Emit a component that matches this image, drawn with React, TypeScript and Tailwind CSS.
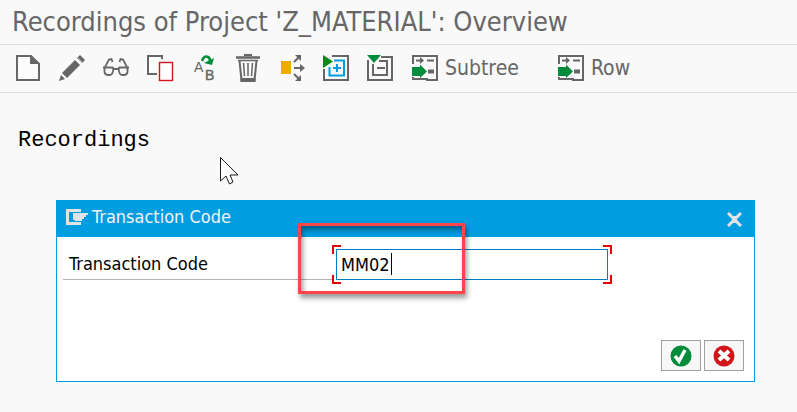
import { useState } from "react";
import type { ReactNode } from "react";

function Icon({ children }: { children: ReactNode }) {
  return (
    <svg viewBox="0 0 28 28" className="h-7 w-7 shrink-0" fill="none" stroke="#666666" strokeWidth="2" aria-hidden="true">
      {children}
    </svg>
  );
}

const CreateIcon = () => (
  <Icon>
    <path d="M3 2H17L25 10V26H3Z" fill="#fcfcfc" />
    <path d="M16 1L26 10H16Z" fill="#666666" stroke="none" />
  </Icon>
);

const EditIcon = () => (
  <Icon>
    <g fill="#666666" stroke="none">
      <path d="M1 27L3 21L7 25Z" />
      <path d="M4 19L17 6L22 11L9 24Z" />
      <path d="M19 4L22 1L27 6L24 9Z" />
    </g>
    <path d="M4 20L8 24" stroke="#f9f9f9" strokeWidth="1" />
    <path d="M20 4L24 8" stroke="#f9f9f9" strokeWidth="0.600" />
  </Icon>
);

const DisplayIcon = () => (
  <Icon>
    <g strokeWidth="1.800">
      <path d="M1 13.500H10.500L12 15H16L17.500 13.500H27" />
      <path d="M2.500 14V18Q3 21 6 21H8Q11 21 11.500 14" />
      <path d="M16.500 14Q17 21 20 21H22Q25 21 25.500 18V14" />
      <path d="M3 13L7 5.500L9.500 5L10.500 8M25 13L21 5.500L18.500 5L17.500 8" />
    </g>
  </Icon>
);

const CopyIcon = () => (
  <Icon>
    <path d="M2 2H16V8H13V20H2Z" fill="#fcfcfc" stroke="none" />
    <path d="M16 5V2H2V20H11" />
    <rect x="13.5" y="8.5" width="13" height="18" fill="#fff" stroke="#d0161b" strokeWidth="1.4" />
  </Icon>
);

const RenameIcon = () => (
  <Icon>
    <g fill="#666666" stroke="none" className="font-['Liberation_Sans',sans-serif]">
      <text x="4" y="18" fontSize="14">A</text>
      <text x="15" y="26" fontSize="14" stroke="#666666" strokeWidth="0.4">B</text>
    </g>
    <path d="M12 7Q14 1 18 3Q20 4 20 7" stroke="#008c3a" strokeWidth="2.6" />
    <path d="M14 9L24 4L22 11Z" fill="#008c3a" stroke="none" />
  </Icon>
);

const DeleteIcon = () => (
  <Icon>
    <path d="M10 1H18" />
    <path d="M2 3.500H26" strokeWidth="2.500" />
    <path d="M4 6.500H24" strokeWidth="1.500" />
    <path d="M5.500 7L7.500 26H20.500L22.500 7" />
    <path d="M6.500 24H21.500V28H6.500Z" fill="#666666" stroke="none" />
    <path d="M9.500 9L10.500 22M14 9V22M18.500 9L17.500 22" strokeWidth="1.5" />
  </Icon>
);

const WhereUsedIcon = () => (
  <Icon>
    <rect x="3" y="7" width="10" height="13" fill="#f0ab00" stroke="none" />
    <path d="M16 8L21 3M16 14H24M16 20L21 25" />
    <path d="M17 1H23V7ZM22 10L27 14L22 18ZM17 27H23V21Z" fill="#666666" stroke="none" />
  </Icon>
);

const ExpandIcon = () => (
  <Icon>
    <path d="M10 2H26V26H2V15" />
    <path d="M12 6.500H22V21.500H7.500V13" stroke="#009de0" />
    <path d="M11 14H19M15 10V18" stroke="#009de0" />
    <path d="M1 1L11 7.500L1 14Z" fill="#008c1a" stroke="none" />
  </Icon>
);

const CollapseIcon = () => (
  <Icon>
    <path d="M15 3H26V26H2V6" />
    <path d="M13 7H21V21H7V10" />
    <path d="M11 14H19" />
    <path d="M1 1H15L8 9Z" fill="#008c3a" stroke="none" />
  </Icon>
);

const InsertIcon = () => (
  <Icon>
    <path d="M2 10V2H26V26H15M2 23V25H17" />
    <path d="M5 6.500H11M16 6.500H23" />
    <path d="M9 3V10L13 6.500Z" fill="#666666" stroke="none" />
    <path d="M17 17.500H23" strokeWidth="4" />
    <path d="M1 13H9V10.500L16 17.500L9 24V22H1Z" fill="#008c3a" stroke="none" />
  </Icon>
);

const tools = [
  { name: "Create", Glyph: CreateIcon },
  { name: "Change", Glyph: EditIcon },
  { name: "Display", Glyph: DisplayIcon },
  { name: "Copy", Glyph: CopyIcon },
  { name: "Rename", Glyph: RenameIcon },
  { name: "Delete", Glyph: DeleteIcon },
  { name: "Where used", Glyph: WhereUsedIcon },
  { name: "Expand", Glyph: ExpandIcon },
  { name: "Collapse", Glyph: CollapseIcon },
];

function Toolbar() {
  return (
    <div role="toolbar" className="flex h-12 items-center border-b border-[#dcdcdc] px-3.5 pb-px text-[21px] leading-7">
      <div className="flex gap-4">
        {tools.map(({ name, Glyph }) => (
          <button key={name} type="button" aria-label={name}>
            <Glyph />
          </button>
        ))}
      </div>
      <div className="ml-[17px] flex gap-[38px]">
        <button type="button" className="flex items-center gap-1.5">
          <InsertIcon />
          Subtree
        </button>
        <button type="button" className="flex items-center gap-1.5">
          <InsertIcon />
          Row
        </button>
      </div>
    </div>
  );
}

function TransactionField() {
  const [code, setCode] = useState("MM02");
  return (
    <div className="flex items-end pt-2 pl-1.5">
      <label htmlFor="tcode" className="mb-1 h-[31px] w-[269px] border-b border-[#b4b4b4] pl-1.5 text-[18px] leading-[30px]">
        Transaction Code
      </label>
      <div className="relative p-1">
        <span className="absolute top-0 left-0 h-[9px] w-[9px] border-t-2 border-l-2 border-[#e00008]" />
        <span className="absolute top-0 right-0 h-[9px] w-[9px] border-t-2 border-r-2 border-[#e00008]" />
        <span className="absolute bottom-0 left-0 h-[9px] w-[9px] border-b-2 border-l-2 border-[#e00008]" />
        <span className="absolute right-0 bottom-0 h-[9px] w-[9px] border-r-2 border-b-2 border-[#e00008]" />
        <input
          id="tcode"
          value={code}
          onChange={(e) => setCode(e.target.value)}
          className="block h-[31px] w-[272px] border border-[#007cc0] bg-white px-1 text-[18px] text-black outline-none"
        />
        <span className="absolute top-2 left-[59px] h-[22px] w-px bg-black" />
        <span className="pointer-events-none absolute -top-[22px] -left-[34px] h-[71px] w-[167px] border-3 border-[#fb4549] shadow-[2px_4px_5px_rgba(0,0,0,0.4),inset_2px_4px_5px_rgba(0,0,0,0.4)]" />
      </div>
    </div>
  );
}

function TransactionDialog() {
  return (
    <section role="dialog" aria-label="Transaction Code" className="mr-[42px] ml-14 border border-[#009de0] bg-white text-black">
      <header className="flex h-9 items-center justify-between bg-[#009de0] pr-3 pl-[9px] text-[#f0f4f6]">
        <div className="flex items-start gap-[3px]">
          <svg viewBox="0 0 23 16" className="mt-1 h-4 w-[23px]" fill="#dfe3e5" aria-hidden="true">
            <path d="M0 0H15V3H3V13H15V16H0Z" />
            <path d="M7 4H22V6H20V8H18V10H16V12H9V11H7Z" />
          </svg>
          <h2 className="pb-1 text-[18px] leading-6">Transaction Code</h2>
        </div>
        <button type="button" aria-label="Close">
          <svg viewBox="0 0 15 15" className="h-[15px] w-[15px]" aria-hidden="true">
            <path d="M1 1L14 14M14 1L1 14" stroke="#dfe3e5" strokeWidth="3" />
            <rect x="5" y="4" width="5" height="7" fill="#dfe3e5" />
          </svg>
        </button>
      </header>
      <TransactionField />
      <footer className="flex justify-end gap-[3px] pt-14 pr-2.5 pb-2.5">
        <button type="button" aria-label="Continue" className="flex h-[31px] w-10 items-center justify-center border border-[#a0a0a0] bg-[#f7f7f7]">
          <svg viewBox="0 0 22 22" className="h-[22px] w-[22px]" aria-hidden="true">
            <circle cx="11" cy="11" r="10.500" fill="#008c3a" />
            <path d="M5 11L9 16L15 5" fill="none" stroke="#fff" strokeWidth="3.500" />
          </svg>
        </button>
        <button type="button" aria-label="Cancel" className="flex h-[31px] w-10 items-center justify-center border border-[#a0a0a0] bg-[#f7f7f7]">
          <svg viewBox="0 0 22 22" className="h-[22px] w-[22px]" aria-hidden="true">
            <circle cx="11" cy="11" r="10.500" fill="#d0161b" />
            <path d="M6 6L16 15M16 6L6 15" stroke="#fff" strokeWidth="4" />
          </svg>
        </button>
      </footer>
    </section>
  );
}

export default function App() {
  return (
    <main className="min-h-screen bg-[#f9f9f9] font-['Tahoma','DejaVu_Sans_Condensed','Noto_Sans',sans-serif] text-[#666666]">
      <h1 className="h-[45px] border-b border-[#dcdcdc] pl-3 text-[27px] leading-[43px] whitespace-nowrap">
        Recordings of Project 'Z_MATERIAL': Overview
      </h1>
      <Toolbar />
      <div className="relative h-[107px] pt-9 pl-[18px]">
        <p className="font-['Liberation_Mono',monospace] text-[22px] leading-6 text-black">Recordings</p>
        <svg viewBox="0 0 19 28" className="absolute top-16 left-[220px] h-7 w-[19px]" aria-hidden="true">
          <path d="M0.500 0.500V24L6 19L9.500 27L13 25L10 18H18Z" fill="#fff" stroke="#1a1a22" />
        </svg>
      </div>
      <TransactionDialog />
    </main>
  );
}
